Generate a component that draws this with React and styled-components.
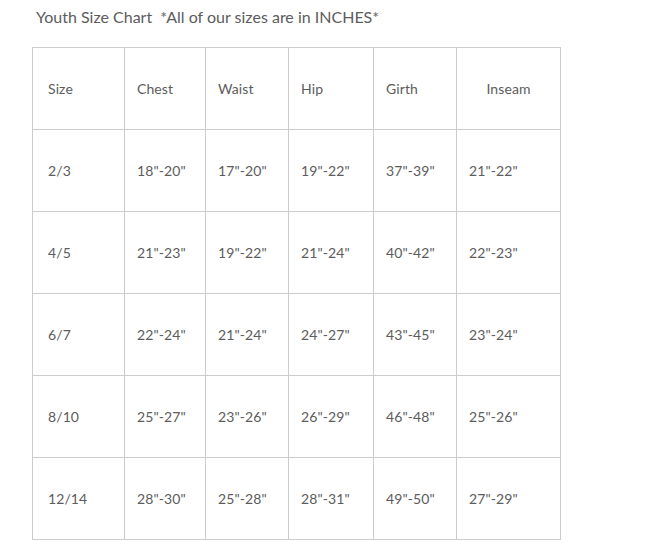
import React from 'react';
import styled, { createGlobalStyle } from 'styled-components';

const GlobalStyle = createGlobalStyle`
  body {
    margin: 0;
    background: #fff;
    font-family: Lato, "Noto Sans", sans-serif;
    color: #5c5c5c;
  }
`;

const Page = styled.div`
  padding: 7px 0 0 32px;
`;

const Title = styled.p`
  margin: 0 0 20px 4px;
  font-size: 16px;
  line-height: 20px;
`;

const Table = styled.table`
  border-collapse: collapse;
  table-layout: fixed;
  width: 529px;
`;

const Cell = styled.td`
  border: 1px solid #cccccc;
  height: 81px;
  padding: 0 0 0 ${(p) => p.$pad}px;
  font-size: 14px;
  text-align: ${(p) => (p.$center ? 'center' : 'left')};
  vertical-align: middle;
  letter-spacing: 0.1px;
`;

const columns = [
  { name: 'Size', width: 92, pad: 15 },
  { name: 'Chest', width: 81, pad: 12 },
  { name: 'Waist', width: 83, pad: 12 },
  { name: 'Hip', width: 85, pad: 12 },
  { name: 'Girth', width: 83, pad: 12 },
  { name: 'Inseam', width: 104, pad: 12 },
];

const rows = [
  ['2/3', '18"-20"', '17"-20"', '19"-22"', '37"-39"', '21"-22"'],
  ['4/5', '21"-23"', '19"-22"', '21"-24"', '40"-42"', '22"-23"'],
  ['6/7', '22"-24"', '21"-24"', '24"-27"', '43"-45"', '23"-24"'],
  ['8/10', '25"-27"', '23"-26"', '26"-29"', '46"-48"', '25"-26"'],
  ['12/14', '28"-30"', '25"-28"', '28"-31"', '49"-50"', '27"-29"'],
];

export default function App() {
  return (
    <Page>
      <GlobalStyle />
      <Title>Youth Size Chart&nbsp; *All of our sizes are in INCHES*</Title>
      <Table>
        <colgroup>
          {columns.map((c) => (
            <col key={c.name} style={{ width: c.width }} />
          ))}
        </colgroup>
        <tbody>
          <tr>
            {columns.map((c, i) => (
              <Cell key={c.name} $pad={i === 5 ? 0 : c.pad} $center={i === 5}>
                {c.name}
              </Cell>
            ))}
          </tr>
          {rows.map((r) => (
            <tr key={r[0]}>
              {r.map((v, i) => (
                <Cell key={i} $pad={columns[i].pad}>
                  {v}
                </Cell>
              ))}
            </tr>
          ))}
        </tbody>
      </Table>
    </Page>
  );
}
